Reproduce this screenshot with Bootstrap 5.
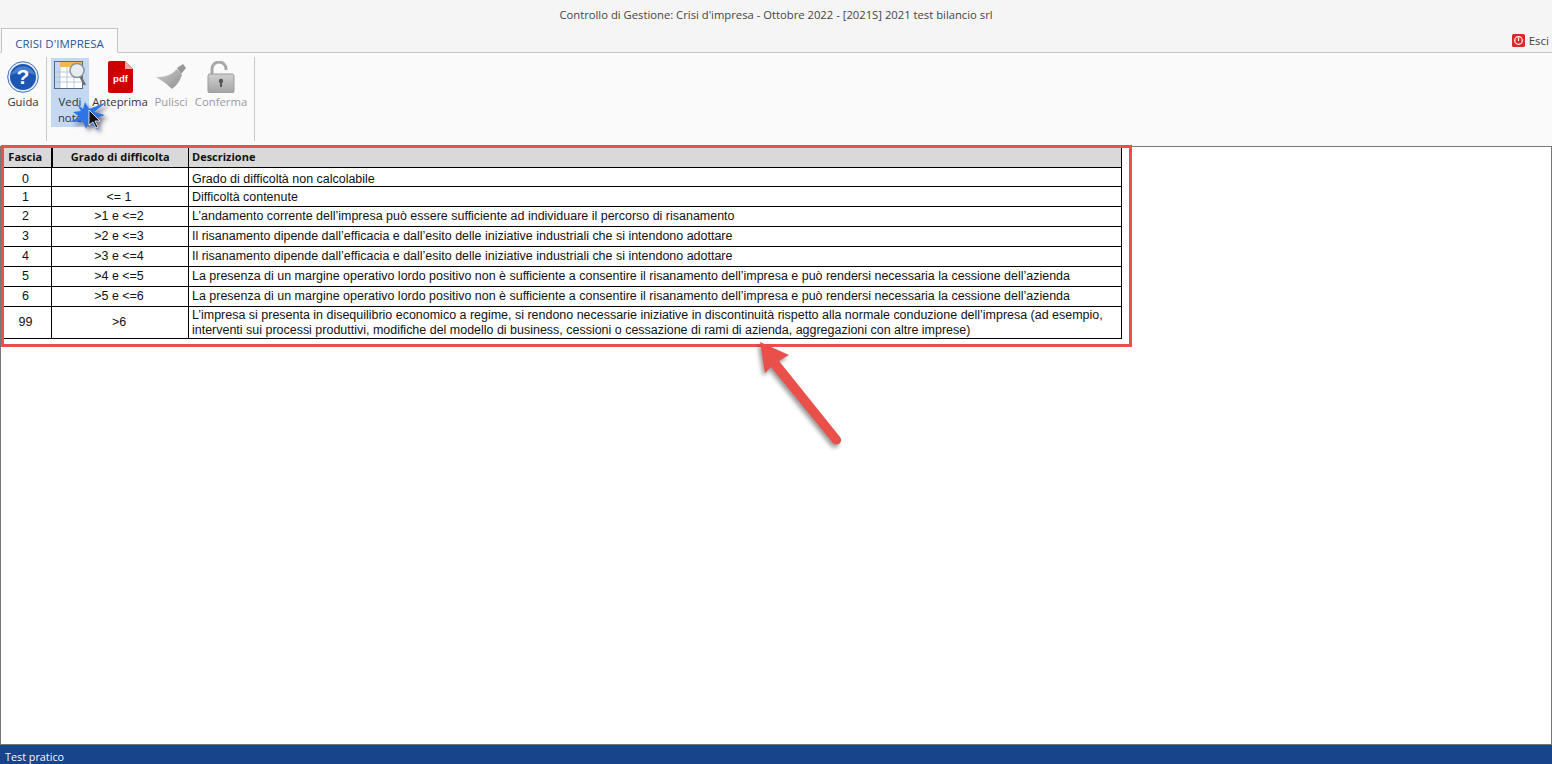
<!DOCTYPE html>
<html lang="it">
<head>
  <meta charset="UTF-8">
  <title>Controllo di Gestione</title>
  <link href="https://cdn.jsdelivr.net/npm/bootstrap@5.3.3/dist/css/bootstrap.min.css" rel="stylesheet">
  <style>
    html, body { height: 100%; }
    body { font-family: "Open Sans", "Noto Sans", sans-serif; font-size: 11.3px; color: #333; background: #f5f5f5; overflow: hidden; }
    .title-bar { height: 28px; font-size: 11.25px; padding-top: 7px; color: #444; }
    .tab-row { height: 25px; border-bottom: 1px solid #c4c4c4; }
    .tab-row .nav-tabs .nav-link.active { height: 25px; width: 117px; margin-left: 1px; padding: 6px 0 0; text-align: center; font-size: 11.5px; color: #2b579a; background: #fafafa; border: 1px solid #c4c4c4; border-bottom-color: #fafafa; border-radius: 0; }
    .exit-link { font-size: 11.5px; padding: 4px 3px 0 0; color: #444; }
    .exit-link svg { margin-top: 2px; }
    .ribbon { height: 93px; background: #fafafa; padding: 5px 0 0 3px; }
    .rb-item { line-height: 16px; color: #333; padding-top: 3px; flex: none; text-align: center; }
    .rb-item svg { display: block; margin: 0 auto 1px; }
    .rb-off { color: #999; }
    .rb-sel { background: #c5d8f1; height: 69px; width: 38px; margin-left: 4px; margin-right: 3px; }
    .rb-sep { width: 1px; height: 84px; margin-top: -1px; background: #c9c9c9; flex: none; }
    .content-box { background: #fff; border: 1px solid #777; position: relative; }
    .grid-table { width: 1121px; margin: 0; table-layout: fixed; font-family: "Liberation Sans", Arial, sans-serif; font-size: 12.47px; line-height: 13px; color: #111; --bs-table-border-color: #000; --bs-table-color: #111; border-color: #000; }
    .grid-table th, .grid-table td { padding: 0 3px; height: 20px; vertical-align: middle; }
    .grid-table td:first-child { padding-right: 5px; }
    .grid-table td:nth-child(2) { padding-right: 5px; }
    .grid-table thead th { background: #d9d9d9; font-family: "Open Sans", sans-serif; font-size: 11px; color: #111; padding-bottom: 2px; }
    .grid-table thead th:first-child { border-right-width: 2px; padding-right: 5px; }
    .grid-table tbody tr:nth-child(1) td { height: 19px; padding-top: 4px; }
    .grid-table tbody tr:nth-child(2) td { padding-top: 1px; }
    .grid-table tbody tr:last-child td { height: 32px; line-height: 15px; }
    .status-bar { height: 19px; background: #17448a; color: #f4f7fb; padding: 4px 0 0 5px; line-height: 16px; font-size: 10.8px; }
    .red-frame { position: absolute; left: 1px; top: 145px; width: 1131px; height: 202px; border: 3px solid #ea4f4a; pointer-events: none; }
    .red-arrow { position: absolute; left: 750px; top: 335px; filter: drop-shadow(-2px 3px 2px rgba(0,0,0,.4)); }
    .click-mark { position: absolute; left: 69px; top: 92px; filter: drop-shadow(3px 3px 2px rgba(0,0,40,.55)); }
  </style>
</head>
<body class="d-flex flex-column">

  <div class="title-bar text-center flex-shrink-0">Controllo di Gestione: Crisi d'impresa - Ottobre 2022 - [2021S] 2021 test bilancio srl</div>

  <div class="tab-row d-flex justify-content-between flex-shrink-0">
    <ul class="nav nav-tabs border-0">
      <li class="nav-item"><a class="nav-link active" href="#">CRISI D'IMPRESA</a></li>
    </ul>
    <div class="exit-link d-flex align-items-start gap-1">
      <svg width="13" height="13" viewBox="0 0 13 13"><rect width="13" height="13" rx="1.5" fill="#dc2a2a"/><circle cx="6.5" cy="6.5" r="3.8" fill="none" stroke="#fff" stroke-width="1.2"/><path d="M6.5 3.6v3.4" stroke="#fff" stroke-width="1.3"/></svg>
      <span>Esci</span>
    </div>
  </div>

  <div class="ribbon d-flex flex-shrink-0">
    <div class="rb-item" style="width:40px">
      <svg width="32" height="32" viewBox="0 0 32 32">
        <circle cx="16" cy="16" r="15.3" fill="#e8eef8" stroke="#3f6fb5"/>
        <circle cx="16" cy="16" r="13" fill="#1c55b4"/>
        <path d="M4 14a12.500 12 0 0 1 24 0q-12-6-24 0z" fill="#5d8fdc" opacity=".7"/>
        <text x="16" y="23" text-anchor="middle" font-family="Liberation Sans" font-weight="700" font-size="21" fill="#fff">?</text>
      </svg>
      Guida
    </div>
    <div class="rb-sep" style="margin-left:3px"></div>
    <div class="rb-item rb-sel">
      <svg width="34" height="32" viewBox="0 0 34 32">
        <rect x="1.500" y=".5" width="28" height="27" fill="#fff" stroke="#5a6b80"/>
        <rect x="2" y="1" width="27" height="5" fill="#f5b64e"/>
        <rect x="2" y="1" width="5" height="26" fill="#c5d8ee"/>
        <path d="M7 6v21M14 6v21M21 6v21M2 11h27M2 16h27M2 21h27" stroke="#a9bdd6" stroke-width=".8"/>
        <path d="M27 15l5 9" stroke="#6f6f6f" stroke-width="2.5"/>
        <circle cx="24" cy="9.500" r="7" fill="#e7edf1" stroke="#8d9499" stroke-width="1.500"/>
      </svg>
      Vedi<br>note
    </div>
    <div class="rb-item" style="width:56px">
      <svg width="25" height="32" viewBox="0 0 25 32">
        <path d="M2 0h15l8 8v22a2 2 0 0 1-2 2H2a2 2 0 0 1-2-2V2a2 2 0 0 1 2-2z" fill="#cc0000"/>
        <path d="M17 0l8 8h-8z" fill="#f0a9a9"/>
        <text x="12.500" y="21" text-anchor="middle" font-family="Liberation Sans" font-weight="700" font-size="9.500" fill="#fff">pdf</text>
      </svg>
      Anteprima
    </div>
    <div class="rb-item rb-off ms-1" style="width:38px">
      <svg width="32" height="32" viewBox="0 0 32 32">
        <defs><linearGradient id="brushFill" x1="0" y1="0" x2="1" y2="1"><stop offset="0" stop-color="#cfcfcf"/><stop offset="1" stop-color="#8f8f8f"/></linearGradient></defs>
        <path d="M22 7l6-4 3 4-5 6z" fill="#979797"/>
        <path d="M22 8l5 6q-3 9-10 14-7-7-16-12 13 1 21-8z" fill="url(#brushFill)"/>
      </svg>
      Pulisci
    </div>
    <div class="rb-item rb-off" style="width:54px;margin-left:4px">
      <svg width="28" height="32" viewBox="0 0 28 32">
        <defs><linearGradient id="lockFill" x1="0" y1="0" x2="0" y2="1"><stop offset="0" stop-color="#d0d0d0"/><stop offset="1" stop-color="#a3a3a3"/></linearGradient></defs>
        <path d="M5 14V8a7 7 0 0 1 14 0v1" fill="none" stroke="#a8a8a8" stroke-width="3"/>
        <rect x="1" y="13" width="26" height="19" rx="2" fill="url(#lockFill)" stroke="#9b9b9b"/>
        <circle cx="14" cy="20" r="2.200" fill="#555"/><path d="M14 20v6" stroke="#555" stroke-width="2"/>
      </svg>
      Conferma
    </div>
    <div class="rb-sep" style="margin-left:6px"></div>
  </div>

  <div class="content-box flex-grow-1">
    <table class="table table-bordered grid-table">
      <colgroup><col style="width:50px"><col style="width:137px"><col></colgroup>
      <thead>
        <tr><th class="text-center">Fascia</th><th class="text-center">Grado di difficolta</th><th>Descrizione</th></tr>
      </thead>
      <tbody>
        <tr><td class="text-center">0</td><td class="text-center"></td><td>Grado di difficoltà non calcolabile</td></tr>
        <tr><td class="text-center">1</td><td class="text-center">&lt;= 1</td><td>Difficoltà contenute</td></tr>
        <tr><td class="text-center">2</td><td class="text-center">&gt;1 e &lt;=2</td><td>L’andamento corrente dell’impresa può essere sufficiente ad individuare il percorso di risanamento</td></tr>
        <tr><td class="text-center">3</td><td class="text-center">&gt;2 e &lt;=3</td><td>Il risanamento dipende dall’efficacia e dall’esito delle iniziative industriali che si intendono adottare</td></tr>
        <tr><td class="text-center">4</td><td class="text-center">&gt;3 e &lt;=4</td><td>Il risanamento dipende dall’efficacia e dall’esito delle iniziative industriali che si intendono adottare</td></tr>
        <tr><td class="text-center">5</td><td class="text-center">&gt;4 e &lt;=5</td><td>La presenza di un margine operativo lordo positivo non è sufficiente a consentire il risanamento dell’impresa e può rendersi necessaria la cessione dell’azienda</td></tr>
        <tr><td class="text-center">6</td><td class="text-center">&gt;5 e &lt;=6</td><td>La presenza di un margine operativo lordo positivo non è sufficiente a consentire il risanamento dell’impresa e può rendersi necessaria la cessione dell’azienda</td></tr>
        <tr><td class="text-center">99</td><td class="text-center">&gt;6</td><td>L’impresa si presenta in disequilibrio economico a regime, si rendono necessarie iniziative in discontinuità rispetto alla normale conduzione dell’impresa (ad esempio, interventi sui processi produttivi, modifiche del modello di business, cessioni o cessazione di rami di azienda, aggregazioni con altre imprese)</td></tr>
      </tbody>
    </table>
  </div>

  <div class="status-bar flex-shrink-0">Test pratico</div>

  <!-- annotations over the screen -->
  <div class="red-frame"></div>
  <svg class="red-arrow" width="110" height="125" viewBox="0 0 110 125">
    <path d="M10 7l29 13-10 6 61 76a4.500 4.500 0 0 1-7 6L21 32l-6 6z" fill="#ea4f4a"/>
  </svg>
  <svg class="click-mark" width="48" height="48" viewBox="0 0 48 48">
    <path d="M16 10L20 17L38 10L25 20L36 23L25 27L29 38L20 30L17 37L14 29L0 30L11 25L4 20L12 19L8 12L14 17Z" fill="#2f74e6"/>
    <path d="M20 18v15l4-3 3 6 2-1-3-6h5z" fill="#111" stroke="#fff" stroke-width=".8"/>
  </svg>

  <script src="https://cdn.jsdelivr.net/npm/bootstrap@5.3.3/dist/js/bootstrap.bundle.min.js"></script>
</body>
</html>
